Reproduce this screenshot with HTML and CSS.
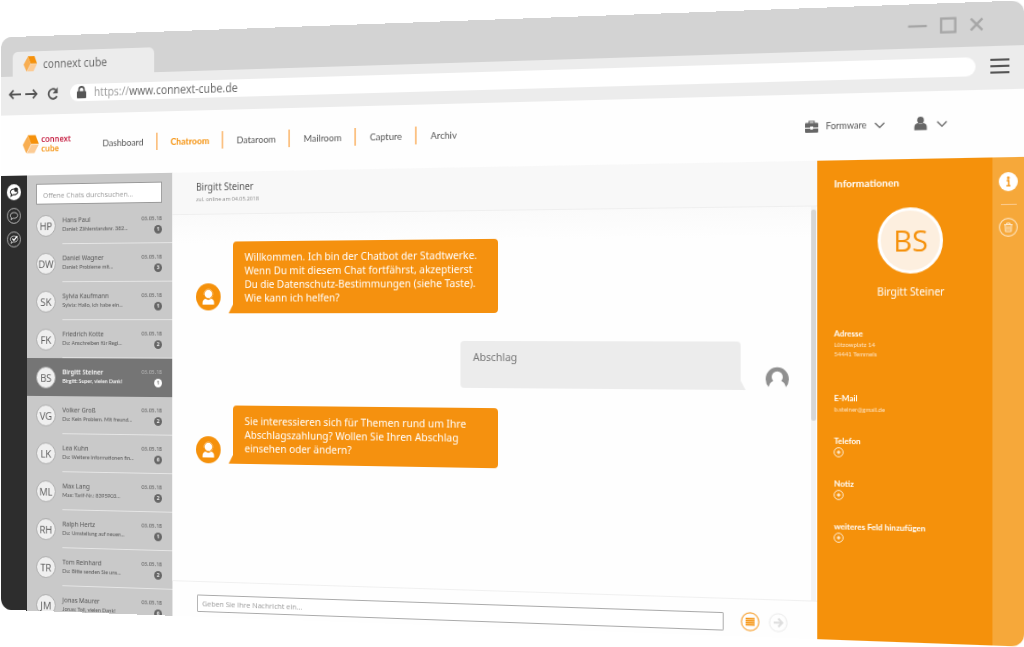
FILE: index.html
```html
<!DOCTYPE html>
<html lang="de">
<head>
    <meta charset="UTF-8">
    <meta name="viewport" content="width=device-width, initial-scale=1.0">
    <title>connext cube</title>
    <link rel="stylesheet" href="styles.css">
</head>
<body>
    <!-- Shared symbols -->
    <svg class="symbols" aria-hidden="true">
        <symbol id="cube" viewBox="0 0 18 18">
            <path d="M5.500 0h9L18 8.800H9.500z" fill="#f5910b"/>
            <path d="M5.500 0.800L0 9.800 4 18 9.500 8.800z" fill="#f8ae52"/>
            <path d="M9.800 9.400H18L13.200 18H4.500z" fill="#fccb94"/>
        </symbol>
        <symbol id="chevron" viewBox="0 0 10 10">
            <path d="M0.500 3L5 7.500 9.500 3" fill="none" stroke="#666" stroke-width="1.200"/>
        </symbol>
        <symbol id="agent" viewBox="0 0 28 28">
            <circle cx="14" cy="14" r="14" fill="#f5910b"/>
            <circle cx="14" cy="11" r="4.300" fill="#fff"/>
            <path d="M9 12a5.100 5.100 0 1 1 10 0M18.800 12.500c0 2-1.500 3-4 3.200" fill="none" stroke="#fbd3a0" stroke-width=".6"/>
            <path d="M7.500 22v-2c0-2.500 1.500-3.800 3.500-4 2 1.500 4 1.500 6 0 2 .2 3.500 1.500 3.500 4v2z" fill="#fff"/>
        </symbol>
        <symbol id="plus" viewBox="0 0 10 10">
            <circle cx="5" cy="5" r="4.400" fill="none" stroke="#fff" stroke-width=".8"/>
            <path d="M5 3.200v3.600M3.200 5h3.600" stroke="#fff" stroke-width="1.100"/>
        </symbol>
    </svg>

    <div class="browser">
        <div class="titlebar">
            <div class="tab">
                <svg class="tab-logo"><use href="#cube"/></svg>
                <span>connext cube</span>
            </div>
            <div class="window-controls">
                <button aria-label="Minimieren"><svg width="19" height="16" viewBox="0 0 19 16"><path d="M0.500 8h18" stroke="#a6a6a6" stroke-width="2.200"/></svg></button>
                <button aria-label="Maximieren"><svg width="16" height="16" viewBox="0 0 16 16"><rect x="1.200" y="1.500" width="13.500" height="13" fill="none" stroke="#a6a6a6" stroke-width="2.200"/></svg></button>
                <button aria-label="Schließen"><svg width="14" height="16" viewBox="0 0 14 16"><path d="M1.500 2.500l11 11M12.500 2.500l-11 11" stroke="#a6a6a6" stroke-width="2.400"/></svg></button>
            </div>
        </div>

        <div class="toolbar">
            <button aria-label="Zurück"><svg width="15" height="12" viewBox="0 0 15 12"><path d="M15 6H2M6 1.500L1.500 6 6 10.500" fill="none" stroke="#555" stroke-width="1.900"/></svg></button>
            <button aria-label="Vorwärts"><svg width="15" height="12" viewBox="0 0 15 12"><path d="M0 6h13M9 1.500L13.500 6 9 10.500" fill="none" stroke="#555" stroke-width="1.900"/></svg></button>
            <button class="reload" aria-label="Neu laden"><svg width="13" height="14" viewBox="0 0 13 14"><path d="M11.500 10A5.200 5.200 0 1 1 10 3.300" fill="none" stroke="#555" stroke-width="2"/><path d="M12.500 0.500v6.500H6.500z" fill="#555"/></svg></button>
            <div class="address">
                <svg width="11" height="13" viewBox="0 0 11 13"><rect x="0" y="5.500" width="11" height="7.500" rx="1" fill="#555"/><path d="M2.500 6V4a3 3 0 0 1 6 0v2" fill="none" stroke="#555" stroke-width="1.800"/></svg>
                <span><span class="scheme">https://</span>www.connext-cube.de</span>
            </div>
            <button class="menu" aria-label="Menü"><svg width="18" height="16" viewBox="0 0 18 16"><path d="M0 2h18M0 8h18M0 14h18" stroke="#555" stroke-width="1.900"/></svg></button>
        </div>

        <header class="header">
            <a class="brand" href="#">
                <svg class="brand-logo"><use href="#cube"/></svg>
                <span>connext<br><span class="brand-cube">cube</span></span>
            </a>
            <nav class="nav">
                <a href="#">Dashboard</a>
                <a href="#" class="active">Chatroom</a>
                <a href="#">Dataroom</a>
                <a href="#">Mailroom</a>
                <a href="#">Capture</a>
                <a href="#">Archiv</a>
            </nav>
            <div class="account">
                <svg width="13" height="12" viewBox="0 0 13 12"><path d="M4 3V1h5v2" fill="none" stroke="#666" stroke-width="1.100"/><path d="M0 3.500q0-1 1-1h11q1 0 1 1V7H8V6H5v1H0zM0 8h5l.5 1h2l.5-1h5v3q0 1-1 1H1q-1 0-1-1z" fill="#666"/></svg>
                <select aria-label="Mandant">
                    <option>Formware</option>
                </select>
                <svg class="chevron"><use href="#chevron"/></svg>
                <button class="user" aria-label="Benutzer">
                    <svg width="13" height="13" viewBox="0 0 13 13"><circle cx="6.500" cy="3.300" r="3.200" fill="#666"/><path d="M0.500 12.800V10q0-3.500 3.500-4 2.500 1.500 5 0 3.500.5 3.500 4v2.800z" fill="#666"/></svg>
                    <svg class="chevron"><use href="#chevron"/></svg>
                </button>
            </div>
        </header>

        <main class="content">
            <div class="rail">
                <button aria-label="Offene Chats"><svg width="17" height="17" viewBox="0 0 17 17"><circle cx="8.500" cy="8.500" r="8.500" fill="#fff"/><path d="M5 12.500l.5-2C3 8.500 4.500 5 8.500 5s5.500 3 3.500 5c-1.300 1.200-3 1.300-4.500 1z" fill="none" stroke="#2c2c2c" stroke-width="1.100"/><circle cx="11" cy="5.800" r="2.400" fill="#2c2c2c"/></svg></button>
                <button aria-label="Alle Chats"><svg width="17" height="17" viewBox="0 0 17 17"><circle cx="8.500" cy="8.500" r="7.900" fill="none" stroke="#ccc" stroke-width=".9"/><path d="M5 12.500l.5-2C3 8.500 4.500 5 8.500 5s5.500 3 3.500 5c-1.300 1.200-3 1.300-4.500 1z" fill="none" stroke="#ccc"/></svg></button>
                <button aria-label="Erledigte Chats"><svg width="17" height="17" viewBox="0 0 17 17"><circle cx="8.500" cy="8.500" r="7.900" fill="none" stroke="#ccc" stroke-width=".9"/><path d="M5 12.500l.5-2C3 8.500 4.500 5 8.500 5s5.500 3 3.500 5c-1.300 1.200-3 1.300-4.500 1z" fill="none" stroke="#ccc"/><path d="M6.500 7.500l2 2L12.500 5" fill="none" stroke="#fff" stroke-width="1.400"/></svg></button>
            </div>

            <aside class="chat-list">
                <input type="text" class="search" placeholder="Offene Chats durchsuchen..." aria-label="Offene Chats durchsuchen">
                <ul>
                    <li><a href="#"><span class="initials">HP</span><span class="who"><b>Hans Paul</b><small>Daniel: Zählerstandsnr. 382...</small></span><span class="meta"><time>03.05.18</time><i>1</i></span></a></li>
                    <li><a href="#"><span class="initials">DW</span><span class="who"><b>Daniel Wagner</b><small>Daniel: Probleme mit...</small></span><span class="meta"><time>03.05.18</time><i>3</i></span></a></li>
                    <li><a href="#"><span class="initials">SK</span><span class="who"><b>Sylvia Kaufmann</b><small>Sylvia: Hallo, ich habe ein...</small></span><span class="meta"><time>03.05.18</time><i>1</i></span></a></li>
                    <li><a href="#"><span class="initials">FK</span><span class="who"><b>Friedrich Kotte</b><small>Du: Anschreiben für Regi...</small></span><span class="meta"><time>03.05.18</time><i>2</i></span></a></li>
                    <li class="selected"><a href="#"><span class="initials">BS</span><span class="who"><b>Birgitt Steiner</b><small>Birgitt: Super, vielen Dank!</small></span><span class="meta"><time>03.05.18</time><i>1</i></span></a></li>
                    <li><a href="#"><span class="initials">VG</span><span class="who"><b>Volker Groß</b><small>Du: Kein Problem. Mit freund...</small></span><span class="meta"><time>03.05.18</time><i>2</i></span></a></li>
                    <li><a href="#"><span class="initials">LK</span><span class="who"><b>Lea Kuhn</b><small>Du: Weitere Informationen fin...</small></span><span class="meta"><time>03.05.18</time><i>6</i></span></a></li>
                    <li><a href="#"><span class="initials">ML</span><span class="who"><b>Max Lang</b><small>Max: Tarif-Nr.: 8395903...</small></span><span class="meta"><time>03.05.18</time><i>2</i></span></a></li>
                    <li><a href="#"><span class="initials">RH</span><span class="who"><b>Ralph Hertz</b><small>Du: Umstellung auf neuen...</small></span><span class="meta"><time>03.05.18</time><i>1</i></span></a></li>
                    <li><a href="#"><span class="initials">TR</span><span class="who"><b>Tom Reinhard</b><small>Du: Bitte senden Sie uns...</small></span><span class="meta"><time>03.05.18</time><i>2</i></span></a></li>
                    <li><a href="#"><span class="initials">JM</span><span class="who"><b>Jonas Maurer</b><small>Jonas: Toll, vielen Dank!</small></span><span class="meta"><time>03.05.18</time><i>6</i></span></a></li>
                </ul>
            </aside>

            <section class="chat">
                <div class="chat-header">
                    <h2>Birgitt Steiner</h2>
                    <p>zul. online am 04.05.2018</p>
                </div>
                <div class="chat-body">
                    <div class="messages">
                        <div class="message">
                            <svg class="agent"><use href="#agent"/></svg>
                            <p class="bubble">Willkommen. Ich bin der Chatbot der Stadtwerke.<br>Wenn Du mit diesem Chat fortfährst, akzeptierst<br>Du die Datenschutz-Bestimmungen (siehe Taste).<br>Wie kann ich helfen?</p>
                        </div>
                        <div class="message own">
                            <p class="bubble">Abschlag</p>
                            <svg class="guest" viewBox="0 0 23 23"><path d="M3 20A11.500 11.500 0 1 1 20 20c-.5-3-2-5-4.500-6a5.500 5.500 0 1 0-8 0C5 15 3.500 17 3 20z" fill="#909090"/><circle cx="11.500" cy="10" r="4.600" fill="#fff"/></svg>
                        </div>
                        <div class="message last">
                            <svg class="agent"><use href="#agent"/></svg>
                            <p class="bubble">Sie interessieren sich für Themen rund um Ihre<br>Abschlagszahlung? Wollen Sie Ihren Abschlag<br>einsehen oder ändern?</p>
                        </div>
                    </div>
                    <div class="scrollbar"><div class="thumb"></div></div>
                </div>
                <form class="composer">
                    <input type="text" placeholder="Geben Sie Ihre Nachricht ein..." aria-label="Nachricht">
                    <button type="button" aria-label="Textbausteine"><svg width="19" height="19" viewBox="0 0 19 19"><circle cx="9.500" cy="9.500" r="8.700" fill="none" stroke="#f7a63c" stroke-width="1.200"/><path d="M5 6.500h9M5 8.500h9M5 10.500h9M5 12.500h9" stroke="#f5910b" stroke-width="1.500"/></svg></button>
                    <button type="submit" aria-label="Senden"><svg width="19" height="19" viewBox="0 0 19 19"><circle cx="9.500" cy="9.500" r="8.700" fill="none" stroke="#eee" stroke-width="1.200"/><path d="M5 9.500h8M9.500 5.500l4 4-4 4" fill="none" stroke="#ddd" stroke-width="1.900"/></svg></button>
                </form>
            </section>

            <aside class="info">
                <h2>Informationen</h2>
                <div class="profile">
                    <div class="portrait">BS</div>
                    <p>Birgitt Steiner</p>
                </div>
                <div class="field address-field">
                    <h3>Adresse</h3>
                    <p>Lützowplatz 14<br>54441 Temmels</p>
                </div>
                <div class="field">
                    <h3>E-Mail</h3>
                    <p>b.steiner@gmail.de</p>
                </div>
                <div class="field">
                    <h3>Telefon</h3>
                    <button aria-label="Telefon hinzufügen"><svg><use href="#plus"/></svg></button>
                </div>
                <div class="field">
                    <h3>Notiz</h3>
                    <button aria-label="Notiz hinzufügen"><svg><use href="#plus"/></svg></button>
                </div>
                <div class="field">
                    <h3>weiteres Feld hinzufügen</h3>
                    <button aria-label="Feld hinzufügen"><svg><use href="#plus"/></svg></button>
                </div>
            </aside>

            <div class="actions">
                <button aria-label="Informationen"><svg width="18" height="18" viewBox="0 0 18 18"><circle cx="9" cy="9" r="9" fill="#fff"/><circle cx="9" cy="5.500" r="1.300" fill="#f5910b"/><path d="M7.500 8h1.900v4.500M7.200 12.800h3.800" fill="none" stroke="#f5910b" stroke-width="1.300"/></svg></button>
                <hr>
                <button aria-label="Löschen"><svg width="18" height="18" viewBox="0 0 18 18"><circle cx="9" cy="9" r="8.400" fill="none" stroke="#fce0b8" stroke-width="1.100"/><path d="M5 6.500h8M7.500 6V5h3v1M6 6.500l.3 6.500h5.400l.3-6.500M8 8v3.700M10 8v3.700" fill="none" stroke="#fce8cc"/></svg></button>
            </div>
        </main>
    </div>
</body>
</html>
```
FILE: styles.css
```css
* {
    box-sizing: border-box;
    margin: 0;
    padding: 0;
}
body {
    background-color: #fff;
    padding: 20px 0;
    overflow: hidden;
    font-family: "Noto Sans", "Open Sans", sans-serif;
    color: #555;
}
a {
    color: inherit;
    text-decoration: none;
}
button {
    background: none;
    border: none;
    line-height: 0;
    cursor: pointer;
}
input,
select {
    font-family: inherit;
}
svg {
    flex: none;
}
.symbols {
    position: absolute;
    width: 0;
    height: 0;
}

/* Browser window, turned slightly away on the left */
.browser {
    display: flex;
    flex-direction: column;
    width: 106vw;
    height: calc(100vh - 40px);
    margin-left: -6vw;
    border-radius: 12px;
    overflow: hidden;
    background-color: #fefefe;
    transform: perspective(3050px) rotateY(-20deg);
}
.titlebar {
    display: flex;
    justify-content: space-between;
    height: 42px;
    flex: none;
    padding: 0 38px 0 14px;
    background-color: #d3d3d3;
}
.tab {
    display: flex;
    align-items: center;
    gap: 6px;
    align-self: flex-end;
    width: 166px;
    height: 26px;
    padding-left: 12px;
    border-radius: 6px 6px 0 0;
    background-color: #ececec;
    font-family: "Open Sans", sans-serif;
    font-size: 12px;
    color: #666;
}
.tab-logo {
    width: 18px;
    height: 16px;
}
.window-controls {
    display: flex;
    align-items: center;
    gap: 12px;
}
.toolbar {
    display: flex;
    align-items: center;
    gap: 5px;
    height: 41px;
    flex: none;
    padding: 0 14px 4px 9px;
    background-color: #ececec;
}
.reload {
    margin-left: 6px;
}
.address {
    display: flex;
    align-items: center;
    gap: 9px;
    flex: 1;
    height: 18px;
    margin: 0 9px;
    padding-left: 8px;
    border-radius: 9px;
    background-color: #fff;
    font-family: "Open Sans", sans-serif;
    font-size: 12px;
    color: #666;
}
.scheme {
    color: #999;
}

/* App header */
.header {
    display: flex;
    align-items: center;
    height: 64px;
    flex: none;
    padding: 0 73px 3px 26px;
    font-family: Lato, sans-serif;
    font-size: 10px;
}
.brand {
    display: flex;
    align-items: center;
    gap: 3px;
    width: 79px;
    font-family: "Open Sans", sans-serif;
    font-size: 9px;
    font-weight: 600;
    line-height: 10px;
    color: #c4183c;
}
.brand-logo {
    width: 19px;
    height: 20px;
}
.brand-cube {
    color: #f5910b;
}
.nav {
    display: flex;
    flex: 1;
}
.nav a {
    padding: 0 14px 0 15px;
    line-height: 18px;
}
.nav a + a {
    border-left: 2px solid #fbc182;
}
.nav .active {
    color: #f5910b;
    font-weight: 700;
}
.account {
    display: flex;
    align-items: center;
}
.account select {
    appearance: none;
    width: 48px;
    margin-left: 7px;
    border: none;
    background: none;
    font-family: Lato, sans-serif;
    font-size: 9px;
    color: #555;
}
.chevron {
    width: 10px;
    height: 10px;
}
.user {
    display: flex;
    align-items: center;
    gap: 9px;
    margin-left: 28px;
}

.content {
    display: flex;
    flex: 1;
    min-height: 0;
}
.rail {
    display: flex;
    flex-direction: column;
    align-items: center;
    gap: 8px;
    width: 31px;
    flex: none;
    padding-top: 9px;
    background-color: #2d2d2d;
}

/* Chat list */
.chat-list {
    width: 170px;
    flex: none;
    padding-top: 9px;
    background-color: #c9c9c9;
    overflow: hidden;
}
.search {
    display: block;
    width: 147px;
    height: 22px;
    margin: 0 11px 2px;
    padding: 0 7px;
    border: 1px solid #999;
    background-color: #fff;
    font-family: "Open Sans", sans-serif;
    font-size: 8px;
}
.search::placeholder,
.composer input::placeholder {
    color: #999;
}
.chat-list ul {
    list-style: none;
}
.chat-list li a {
    display: flex;
    align-items: center;
    height: 40px;
    padding-left: 11px;
}
.initials {
    width: 23px;
    height: 23px;
    flex: none;
    border: 1px solid #aaa;
    border-radius: 50%;
    background-color: #efefef;
    font-family: "Open Sans", sans-serif;
    font-size: 11px;
    line-height: 21px;
    text-align: center;
}
.who {
    flex: 1;
    align-self: stretch;
    margin-left: 8px;
    padding-top: 10px;
    border-bottom: 1px solid #e6e6e6;
    white-space: nowrap;
}
.who b,
.who small {
    display: block;
    font-weight: 400;
}
.who b {
    font-size: 7px;
    line-height: 10px;
}
.who small {
    font-family: Lato, sans-serif;
    font-size: 6px;
    line-height: 8px;
}
.meta {
    display: flex;
    flex-direction: column;
    align-items: flex-end;
    align-self: stretch;
    gap: 2px;
    padding: 10px 12px 0 0;
    border-bottom: 1px solid #e6e6e6;
}
.meta time {
    font-size: 6px;
    line-height: 9px;
}
.meta i {
    width: 9px;
    height: 9px;
    border-radius: 50%;
    background-color: #666;
    color: #eee;
    font-size: 6px;
    font-style: normal;
    font-weight: 700;
    line-height: 9px;
    text-align: center;
}
.selected {
    background-color: #757575;
}
.selected .who,
.selected .meta {
    border-color: #757575;
}
.selected .who b,
.selected .who small {
    color: #fff;
    font-weight: 600;
}
.selected .meta time {
    color: #bbb;
}
.selected .meta i {
    background-color: #fff;
    color: #757575;
}

/* Conversation */
.chat {
    display: flex;
    flex-direction: column;
    flex: 1;
    min-width: 0;
}
.chat-header {
    height: 44px;
    flex: none;
    padding: 8px 27px 0;
    border-bottom: 1px solid #efefef;
    background-color: #f8f8f8;
}
.chat-header h2 {
    font-size: 10px;
    font-weight: 400;
    line-height: 14px;
}
.chat-header p {
    font-family: "Open Sans", sans-serif;
    font-size: 6px;
    line-height: 12px;
    color: #888;
}
.chat-body {
    display: flex;
    flex: 1;
    min-height: 0;
    background: linear-gradient(#fafafa, #fefefe 30px);
}
.messages {
    flex: 1;
    padding: 28px 22px 0 27px;
}
.message {
    display: flex;
    align-items: flex-end;
    gap: 14px;
    margin-bottom: 28px;
}
.bubble {
    position: relative;
    width: 46%;
    padding: 9px 13px;
    border-radius: 4px 4px 4px 0;
    background-color: #f5910f;
    color: #fff;
    font-size: 11px;
    line-height: 14px;
    white-space: nowrap;
}
/* speech tail */
.bubble::before {
    content: "";
    position: absolute;
    left: -5px;
    bottom: 0;
    border-left: 5px solid transparent;
    border-bottom: 9px solid #f5910f;
}
.agent {
    width: 28px;
    height: 28px;
    margin-bottom: 3px;
}
.own {
    justify-content: flex-end;
    gap: 25px;
    margin-bottom: 20px;
}
.own .bubble {
    min-height: 47px;
    border-radius: 4px 4px 0 4px;
    background-color: #ececec;
    color: #777;
}
.own .bubble::before {
    left: auto;
    right: -5px;
    border-left: none;
    border-right: 5px solid transparent;
    border-bottom-color: #ececec;
}
.guest {
    width: 23px;
    height: 23px;
}
.last .agent {
    margin-bottom: 0;
}
.scrollbar {
    width: 5px;
    margin-right: 1px;
    padding-top: 3px;
    background-color: #f3f3f3;
}
.thumb {
    height: 54%;
    border-radius: 2px;
    background-color: #d6d6d6;
}
.composer {
    display: flex;
    align-items: center;
    gap: 9px;
    flex: none;
    padding: 12px 29px 5px 28px;
    border-top: 1px solid #f0f0f0;
}
.composer input {
    flex: 1;
    height: 18px;
    margin-right: 8px;
    padding: 0 5px;
    border: 1px solid #aaa;
    border-radius: 1px;
    background-color: #fff;
    font-family: "Open Sans", sans-serif;
    font-size: 8px;
}

/* Contact panel */
.info {
    width: 169px;
    flex: none;
    padding: 15px 4px 0 16px;
    background-color: #f5910b;
    color: #fff;
}
.info h2 {
    font-family: Lato, sans-serif;
    font-size: 10px;
    line-height: 14px;
}
.profile {
    padding: 17px 0 27px;
    text-align: center;
    font-size: 10px;
    line-height: 14px;
}
.portrait {
    width: 63px;
    height: 63px;
    margin: 0 auto 10px;
    border: 3px solid #fff;
    border-radius: 50%;
    background-color: #fdefdf;
    color: #f5910b;
    font-family: "Open Sans", sans-serif;
    font-size: 28px;
    line-height: 57px;
}
.field {
    min-height: 41px;
}
.field h3 {
    font-family: Lato, sans-serif;
    font-size: 8px;
    line-height: 12px;
}
.field p {
    font-family: Lato, sans-serif;
    font-size: 6px;
    line-height: 9px;
    color: #fde3c3;
}
.field button,
.field svg {
    display: block;
    width: 10px;
    height: 10px;
}
.address-field {
    min-height: 62px;
}
.actions {
    display: flex;
    flex-direction: column;
    align-items: center;
    gap: 12px;
    width: 30px;
    flex: none;
    padding-top: 14px;
    background-color: #f6a83a;
}
.actions hr {
    width: 15px;
    border: none;
    border-top: 1px solid #fbc98a;
}
```
